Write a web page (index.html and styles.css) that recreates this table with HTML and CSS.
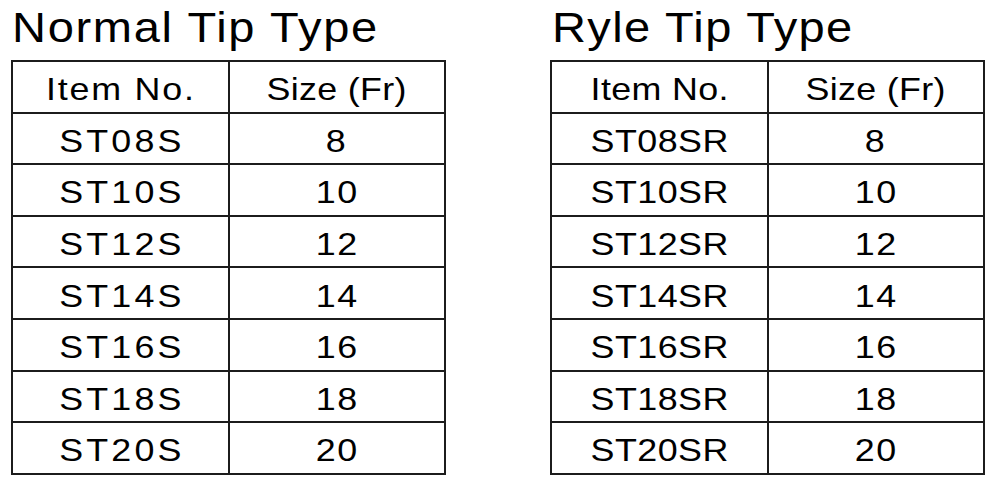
FILE: index.html
```html
<!DOCTYPE html>
<html lang="en">
<head>
<meta charset="utf-8">
<title>Tip Types</title>
<link rel="stylesheet" href="styles.css">
</head>
<body>
<div class="page">
  <section class="panel panel-normal">
    <h2 class="title"><span class="wide">Normal Tip Type</span></h2>
    <table class="sizes">
      <tr><th><span class="wide item-h">Item No.</span></th><th><span class="wide size-h">Size (Fr)</span></th></tr>
      <tr><td><span class="wide code">ST08S</span></td><td><span class="wide num">8</span></td></tr>
      <tr><td><span class="wide code">ST10S</span></td><td><span class="wide num">10</span></td></tr>
      <tr><td><span class="wide code">ST12S</span></td><td><span class="wide num">12</span></td></tr>
      <tr><td><span class="wide code">ST14S</span></td><td><span class="wide num">14</span></td></tr>
      <tr><td><span class="wide code">ST16S</span></td><td><span class="wide num">16</span></td></tr>
      <tr><td><span class="wide code">ST18S</span></td><td><span class="wide num">18</span></td></tr>
      <tr><td><span class="wide code">ST20S</span></td><td><span class="wide num">20</span></td></tr>
    </table>
  </section>
  <section class="panel panel-ryle">
    <h2 class="title"><span class="wide">Ryle Tip Type</span></h2>
    <table class="sizes">
      <tr><th><span class="wide item-h">Item No.</span></th><th><span class="wide size-h">Size (Fr)</span></th></tr>
      <tr><td><span class="wide code">ST08SR</span></td><td><span class="wide num">8</span></td></tr>
      <tr><td><span class="wide code">ST10SR</span></td><td><span class="wide num">10</span></td></tr>
      <tr><td><span class="wide code">ST12SR</span></td><td><span class="wide num">12</span></td></tr>
      <tr><td><span class="wide code">ST14SR</span></td><td><span class="wide num">14</span></td></tr>
      <tr><td><span class="wide code">ST16SR</span></td><td><span class="wide num">16</span></td></tr>
      <tr><td><span class="wide code">ST18SR</span></td><td><span class="wide num">18</span></td></tr>
      <tr><td><span class="wide code">ST20SR</span></td><td><span class="wide num">20</span></td></tr>
    </table>
  </section>
</div>
</body>
</html>
```
FILE: styles.css
```css
html, body {
  margin: 0;
  padding: 0;
  background: #fff;
}
body {
  font-family: "Liberation Sans", Arial, sans-serif;
  color: #000;
}
.page {
  display: flex;
  gap: 104px;
  padding-left: 11px;
}
.panel {
  width: 435px;
}
.wide {
  display: inline-block;
  transform: scaleX(1.12);
  transform-origin: center;
}
.title {
  margin: 0 0 6px 0;
  padding-top: 2px;
  font-size: 42px;
  line-height: 52px;
  font-weight: normal;
  white-space: nowrap;
}
.title .wide {
  transform-origin: left center;
  letter-spacing: 1.5px;
}
.panel-normal .title {
  padding-left: 1px;
}
.panel-ryle .title {
  padding-left: 2px;
}
.panel-ryle .title .wide {
  letter-spacing: 1.2px;
}
.sizes {
  width: 435px;
  border-collapse: collapse;
  table-layout: fixed;
}
.sizes tr {
  height: 51.6px;
}
.sizes th,
.sizes td {
  border: 2px solid #1c1c1c;
  padding: 5px 0 0 0;
  text-align: center;
  font-size: 32px;
  font-weight: normal;
  line-height: 36px;
  white-space: nowrap;
}
.sizes th:first-child,
.sizes td:first-child {
  width: 215px;
}
.panel-normal .item-h {
  letter-spacing: 1.6px;
}
.panel-ryle .item-h {
  letter-spacing: 0.3px;
}
.size-h {
  letter-spacing: 0.3px;
}
.panel-normal .code {
  letter-spacing: 2.8px;
  margin-left: 3px;
}
.panel-ryle .code {
  letter-spacing: 0.4px;
}
.num {
  letter-spacing: 1.5px;
}
```
